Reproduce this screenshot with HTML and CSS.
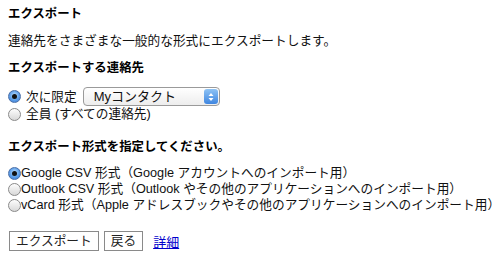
FILE: index.html
```html
<!DOCTYPE html>
<html lang="ja">
<head>
<meta charset="utf-8">
<link rel="stylesheet" href="styles.css">
</head>
<body>
<div class="page">
  <h1 class="title">エクスポート</h1>
  <p class="desc">連絡先をさまざまな一般的な形式にエクスポートします。</p>
  <h2 class="section">エクスポートする連絡先</h2>
  <div class="group">
    <label class="row row-gap">
      <span class="radio checked"></span>
      <span>次に限定</span>
      <span class="select-wrap">
        <span class="select-text">Myコンタクト</span>
        <span class="select-arrow">
          <svg width="12" height="14" viewBox="0 0 12 14"><path d="M6 3 L8.5 6 H3.5 Z M6 11 L8.5 8 H3.5 Z" fill="#fff"/></svg>
        </span>
      </span>
    </label>
    <label class="row row-gap">
      <span class="radio"></span>
      <span>全員 (すべての連絡先)</span>
    </label>
  </div>
  <h2 class="section section2">エクスポート形式を指定してください。</h2>
  <div class="group group2">
    <label class="row">
      <span class="radio checked"></span>
      <span>Google CSV 形式（Google アカウントへのインポート用）</span>
    </label>
    <label class="row">
      <span class="radio"></span>
      <span>Outlook CSV 形式（Outlook やその他のアプリケーションへのインポート用）</span>
    </label>
    <label class="row">
      <span class="radio"></span>
      <span>vCard 形式（Apple アドレスブックやその他のアプリケーションへのインポート用）</span>
    </label>
  </div>
  <div class="actions">
    <button class="btn btn-export">エクスポート</button>
    <button class="btn btn-back">戻る</button>
    <a class="link" href="#">詳細</a>
  </div>
</div>
</body>
</html>
```

FILE: styles.css
```css
html, body {
  margin: 0;
  padding: 0;
  background: #fff;
}
body {
  font-family: "Liberation Sans", "Noto Sans CJK JP", sans-serif;
  font-size: 12.7px;
  color: #000;
}
.page {
  padding: 7px 8px;
}
.title {
  font-size: 12.4px;
  font-weight: bold;
  margin: 0;
  line-height: 15px;
}
.desc {
  margin: 12px 0 0;
  line-height: 15px;
  color: #111;
}
.section {
  font-size: 12.4px;
  font-weight: bold;
  margin: 12px 0 0;
  line-height: 15px;
}
.section2 {
  margin-top: 18px;
}
.group {
  margin-top: 11px;
  display: flex;
  flex-direction: column;
}
.group2 {
  margin-top: 10px;
}
.row {
  display: flex;
  align-items: center;
  line-height: 16px;
  color: #111;
  white-space: nowrap;
}
.row-gap .radio {
  margin-right: 5px;
}
.radio {
  width: 11px;
  height: 11px;
  border-radius: 50%;
  border: 1px solid #8a8a8a;
  background: linear-gradient(#fdfdfd, #d8d8d8);
  box-sizing: content-box;
  flex: none;
  position: relative;
}
.radio.checked {
  border-color: #4a6fa8;
  background: radial-gradient(circle at 50% 40%, #bfe0ff 0%, #5c9ee8 55%, #3a79d2 100%);
}
.radio.checked::after {
  content: "";
  position: absolute;
  left: 3px;
  top: 3px;
  width: 5px;
  height: 5px;
  border-radius: 50%;
  background: #111;
}
.select-wrap {
  position: relative;
  display: inline-flex;
  align-items: center;
  margin-left: 6px;
  width: 135px;
  height: 17px;
  border: 1px solid #9a9a9a;
  border-radius: 4px;
  background: linear-gradient(#ffffff, #ededed);
  box-sizing: content-box;
}
.select-text {
  padding-left: 10px;
  font-size: 13px;
}
.select-arrow {
  position: absolute;
  right: 1px;
  top: 1px;
  width: 14px;
  height: 15px;
  border-radius: 3px;
  background: linear-gradient(#8ec3f5, #3f86e0);
  display: flex;
  align-items: center;
  justify-content: center;
}
.select-arrow svg {
  display: block;
}
.actions {
  margin-top: 18px;
  display: flex;
  align-items: center;
}
.btn {
  font-family: "Liberation Sans", "Noto Sans CJK JP", sans-serif;
  font-size: 12.7px;
  background: #fff;
  border: 1px solid #8a8a8a;
  border-radius: 0;
  height: 20px;
  padding: 0 6px;
  margin: 0;
  color: #222;
  line-height: 18px;
  white-space: nowrap;
}
.btn-export {
  margin-left: 1px;
}
.btn-back {
  margin-left: 5px;
  padding: 0 6px;
}
.link {
  margin-left: 10px;
  color: #0000cc;
  text-decoration: underline;
  font-size: 13px;
}
```
